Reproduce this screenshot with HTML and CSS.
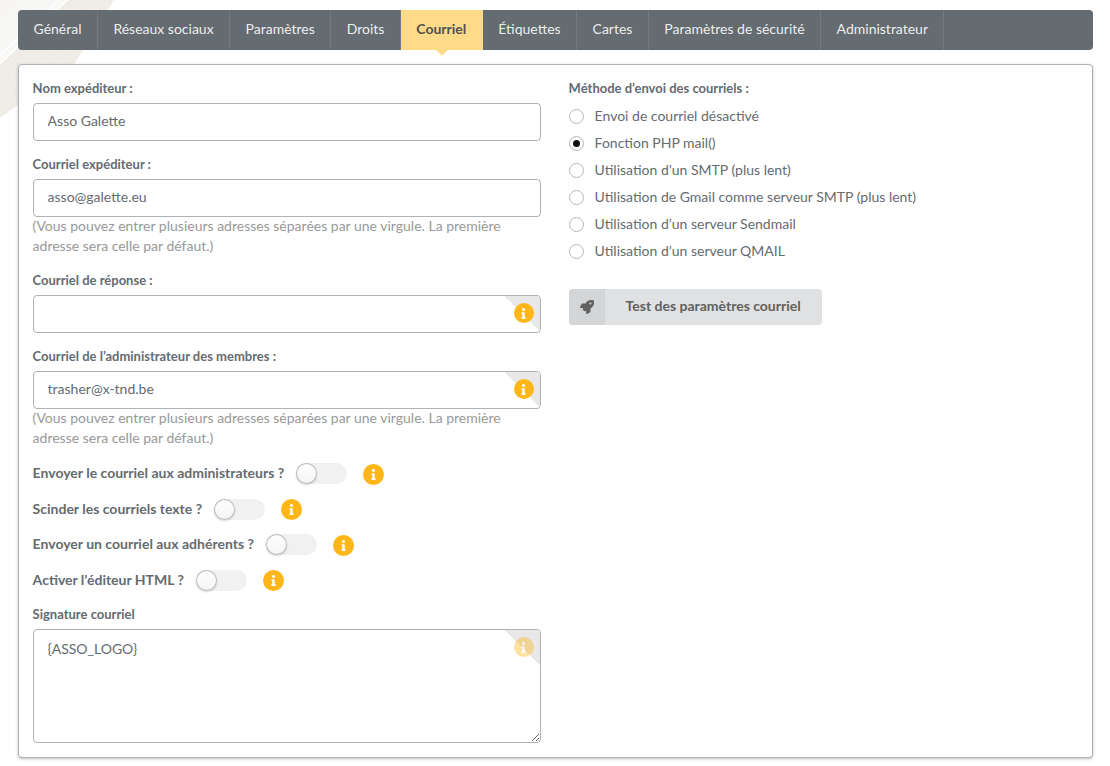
FILE: index.html
```
<!DOCTYPE html>
<html lang="fr">
<head>
<meta charset="utf-8">
<title>Paramètres - Courriel</title>
<link rel="stylesheet" href="styles.css">
</head>
<body>
<svg class="backdrop" viewBox="0 0 120 125" aria-hidden="true">
  <defs>
    <pattern id="weave" width="4" height="4" patternUnits="userSpaceOnUse" patternTransform="rotate(-35)">
      <rect width="4" height="4" fill="#f1eeea"/>
      <circle cx="1.500" cy="1.500" r=".9" fill="#ebe7e2"/>
    </pattern>
    <linearGradient id="sheet" x1="0" y1="0" x2="1" y2="1">
      <stop offset="0" stop-color="#f6f5f3"/>
      <stop offset="1" stop-color="#fbfbfa"/>
    </linearGradient>
  </defs>
  <path d="M0 0H114L75 63L0 118Z" fill="url(#weave)"/>
  <path d="M0 0H69L0 65Z" fill="url(#sheet)"/>
  <path d="M0 55L59 0M0 63L67 0" stroke="#fff" stroke-width="1.500"/>
</svg>
<svg class="sprites" aria-hidden="true">
  <symbol id="info" viewBox="0 0 192 512">
    <path d="M20 424.2h20V279.8H20c-11 0-20-9-20-20V212c0-11 9-20 20-20h112c11 0 20 9 20 20v212.200h20c11 0 20 9 20 20V492c0 11-9 20-20 20H20c-11 0-20-9-20-20v-47.800c0-11 9-20 20-20zM96 0C56.200 0 24 32.200 24 72s32.200 72 72 72 72-32.200 72-72S135.800 0 96 0z"/>
  </symbol>
  <symbol id="rocket" viewBox="0 0 512 512">
    <path d="M505.100 19.100C503.800 13 499 8.200 492.900 6.900 460.700 0 435.500 0 410.400 0 307.200 0 245.300 55.200 199.100 128H94.800c-16.300 0-35.600 11.900-42.900 26.500L2.500 253.300A28.400 28.400 0 0 0 0 264a24 24 0 0 0 24 24h103.800l-22.500 22.500c-11.400 11.400-13 32.300 0 45.300l50.900 50.900c11.200 11.200 32.200 13.200 45.300 0l22.500-22.500V488a24 24 0 0 0 24 24c2.900 0 8.100-1.200 10.700-2.600l98.700-49.300c14.600-7.300 26.500-26.500 26.500-42.900V312.800c72.600-46.300 128-108.400 128-211.100.1-25.200.1-50.400-6.800-82.600zM384 168a40 40 0 1 1 0-80 40 40 0 0 1 0 80z"/>
  </symbol>
</svg>
<nav class="tabs">
  <a class="tab">Général</a>
  <a class="tab">Réseaux sociaux</a>
  <a class="tab">Paramètres</a>
  <a class="tab">Droits</a>
  <a class="tab active">Courriel</a>
  <a class="tab">Étiquettes</a>
  <a class="tab">Cartes</a>
  <a class="tab">Paramètres de sécurité</a>
  <a class="tab">Administrateur</a>
</nav>
<form class="panel">
  <div class="column">
    <div class="field">
      <label class="label" for="sender">Nom expéditeur :</label>
      <input class="input" id="sender" type="text" value="Asso Galette">
    </div>
    <div class="field">
      <label class="label" for="mail">Courriel expéditeur :</label>
      <input class="input" id="mail" type="text" value="asso@galette.eu">
      <p class="help">(Vous pouvez entrer plusieurs adresses séparées par une virgule. La première adresse sera celle par défaut.)</p>
    </div>
    <div class="field">
      <label class="label" for="reply">Courriel de réponse :</label>
      <div class="control">
        <input class="input" id="reply" type="text">
        <span class="corner"><span class="info"><svg><use href="#info"/></svg></span></span>
      </div>
    </div>
    <div class="field">
      <label class="label" for="admin">Courriel de l’administrateur des membres :</label>
      <div class="control">
        <input class="input" id="admin" type="text" value="trasher@x-tnd.be">
        <span class="corner"><span class="info"><svg><use href="#info"/></svg></span></span>
      </div>
      <p class="help">(Vous pouvez entrer plusieurs adresses séparées par une virgule. La première adresse sera celle par défaut.)</p>
    </div>
    <div class="switch"><span>Envoyer le courriel aux administrateurs ?</span><span class="toggle"></span><span class="info"><svg><use href="#info"/></svg></span></div>
    <div class="switch"><span>Scinder les courriels texte ?</span><span class="toggle"></span><span class="info"><svg><use href="#info"/></svg></span></div>
    <div class="switch"><span>Envoyer un courriel aux adhérents ?</span><span class="toggle"></span><span class="info"><svg><use href="#info"/></svg></span></div>
    <div class="switch"><span>Activer l’éditeur HTML ?</span><span class="toggle"></span><span class="info"><svg><use href="#info"/></svg></span></div>
    <div class="field">
      <label class="label" for="sign">Signature courriel</label>
      <div class="control">
        <textarea class="input area" id="sign">{ASSO_LOGO}</textarea>
        <span class="corner"><span class="info faded"><svg><use href="#info"/></svg></span></span>
      </div>
    </div>
  </div>
  <div class="column">
    <div class="label">Méthode d’envoi des courriels :</div>
    <div class="radios">
      <label class="radio"><span class="dot"></span>Envoi de courriel désactivé</label>
      <label class="radio"><span class="dot on"></span>Fonction PHP mail()</label>
      <label class="radio"><span class="dot"></span>Utilisation d’un SMTP (plus lent)</label>
      <label class="radio"><span class="dot"></span>Utilisation de Gmail comme serveur SMTP (plus lent)</label>
      <label class="radio"><span class="dot"></span>Utilisation d’un serveur Sendmail</label>
      <label class="radio"><span class="dot"></span>Utilisation d’un serveur QMAIL</label>
    </div>
    <button class="button" type="button"><span class="button-icon"><svg><use href="#rocket"/></svg></span><span class="button-text">Test des paramètres courriel</span></button>
  </div>
</form>
</body>
</html>
```

FILE: styles.css
```
* { box-sizing: border-box; }

body {
  margin: 0;
  height: 766px;
  overflow: hidden;
  padding: 10px 17px 0 18px;
  background: #fff;
  color: #646b71;
  font: 14px/20px Lato, sans-serif;
}

.backdrop {
  position: absolute;
  top: 0;
  left: 0;
  width: 120px;
  height: 125px;
  z-index: -1;
}

.sprites { position: absolute; width: 0; height: 0; }

.tabs {
  display: flex;
  height: 40px;
  border-radius: 4px;
  background: #646b71;
}

.tab {
  position: relative;
  padding: 12px 15.4px 0 15.5px;
  border-right: 1px solid #737a7f;
  color: rgba(255, 255, 255, .9);
  line-height: 14px;
}

.tab.active {
  padding-right: 16.5px;
  border-right: 0;
  background: #ffda89;
  color: #51514f;
  font-weight: 700;
}

.tab.active::after {
  content: "";
  position: absolute;
  left: 50%;
  bottom: -4px;
  width: 8px;
  height: 8px;
  background: #ffda89;
  transform: translateX(-50%) rotate(45deg);
}

.panel {
  display: grid;
  grid-template-columns: 508px 1fr;
  gap: 28px;
  height: 694px;
  margin-top: 14px;
  padding: 14px 14px 14px 13.6px;
  border: 1px solid #a9b3b8;
  border-radius: 4px;
  background: #fff;
  box-shadow: 0 1px 3px rgba(34, 36, 38, .3);
}

.column { min-width: 0; }
.field { margin-bottom: 14px; }

.label {
  display: block;
  height: 24px;
  font-size: 13px;
  font-weight: 700;
  line-height: 19px;
}

.control { position: relative; }

.input {
  display: block;
  width: 100%;
  height: 38px;
  padding: 8px 14px 11px;
  border: 1px solid #adb3b7;
  border-radius: 4px;
  background: #fff;
  color: inherit;
  font: 14px/17px Lato, sans-serif;
  outline: 0;
}

.area {
  height: 114px;
  padding: 10px 14px;
  line-height: 18px;
  resize: vertical;
}

.help { margin: -1px 0 15px; color: #999; }

.corner {
  position: absolute;
  top: 1px;
  right: 1px;
  width: 36px;
  height: 36px;
  padding: 7px 0 0 10px;
  border-radius: 0 3px 0 0;
  background: linear-gradient(45deg, transparent 50%, #e8e8e8 50%);
}

.info {
  display: flex;
  align-items: center;
  justify-content: center;
  width: 21px;
  height: 21px;
  border-radius: 50%;
  background: #ffb619;
  color: #fff;
}

.info svg { width: 5px; height: 11px; fill: currentColor; }
.corner .info { width: 20px; height: 20px; }
.faded { opacity: .4; }

.switch {
  display: flex;
  height: 21.5px;
  margin-bottom: 14px;
  font-weight: 700;
}

.switch .info { margin: .8px 0 0 16px; }

.toggle {
  width: 51px;
  height: 21px;
  margin-left: 11.8px;
  border-radius: 11px;
  background: #f1f1f1;
}

.toggle::before {
  content: "";
  display: block;
  width: 21px;
  height: 21px;
  border-radius: 50%;
  background: linear-gradient(#fff, #f4f4f4);
  box-shadow: 0 1px 2px rgba(34, 36, 38, .2), inset 0 0 0 1px #b5babd;
}

.radios { display: grid; gap: 7px; padding-top: 3px; }
.radio { display: flex; height: 20px; align-items: center; }

.dot {
  display: grid;
  place-items: center;
  width: 15px;
  height: 15px;
  margin-right: 11px;
  border: 1px solid #b2b7ba;
  border-radius: 50%;
}

.on::before {
  content: "";
  width: 7px;
  height: 7px;
  border-radius: 50%;
  background: #111;
}

.button {
  display: flex;
  height: 36px;
  margin-top: 28px;
  padding: 0;
  overflow: hidden;
  border: 0;
  border-radius: 4px;
  background: #e0e1e2;
  color: #606160;
  font: 700 14px/14px Lato, sans-serif;
}

.button-icon {
  display: grid;
  place-items: center;
  width: 36px;
  height: 36px;
  background: #d4d5d6;
}

.button-icon svg { width: 14px; height: 14px; fill: currentColor; }
.button-text { padding: 10px 21px 0; }
```
